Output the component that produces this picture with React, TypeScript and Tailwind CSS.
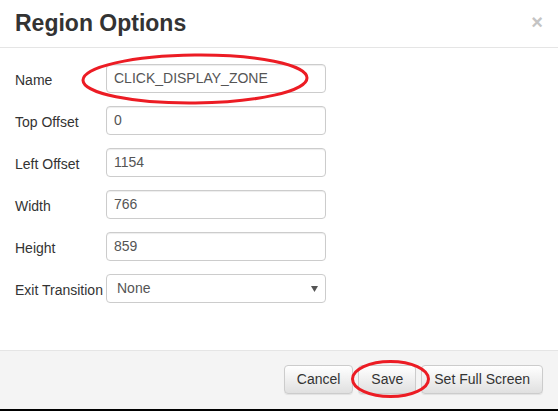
import React from 'react';

const fields: Array<{ label: string; value: string }> = [
  { label: 'Name', value: 'CLICK_DISPLAY_ZONE' },
  { label: 'Top Offset', value: '0' },
  { label: 'Left Offset', value: '1154' },
  { label: 'Width', value: '766' },
  { label: 'Height', value: '859' },
];

function Button({ children }: { children: React.ReactNode }) {
  return (
    <button className="h-[29px] px-[12px] rounded-[4px] border border-[#cccccc] bg-gradient-to-b from-white to-[#e0e0e0] text-[14px] text-[#333333] shadow-[inset_0_1px_0_rgba(255,255,255,0.15),0_1px_1px_rgba(0,0,0,0.075)]">
      {children}
    </button>
  );
}

export default function App() {
  return (
    <div className="relative w-[558px] h-[411px] bg-white flex flex-col font-['Liberation_Sans',Arial,sans-serif] text-[#333333] overflow-hidden">
      {/* Header */}
      <div className="h-[48px] px-[15px] flex items-center justify-between border-b border-[#e5e5e5] shrink-0">
        <h4 className="text-[23px] font-bold leading-none">Region Options</h4>
        <span className="text-[20px] font-bold leading-none text-[#c4c4c4] -mt-[4px]">×</span>
      </div>

      {/* Body */}
      <div className="flex-1 pt-[16px] px-[15px] flex flex-col gap-[13px]">
        {fields.map((f) => (
          <div key={f.label} className="flex items-center h-[29px]">
            <label className="w-[91px] text-[14px] pt-[4px]">{f.label}</label>
            <div className="w-[220px] h-[29px] border border-[#cccccc] rounded-[4px] px-[7px] flex items-center text-[14px] text-[#555555] shadow-[inset_0_1px_1px_rgba(0,0,0,0.075)]">
              {f.value}
            </div>
          </div>
        ))}
        <div className="flex items-center h-[29px]">
          <label className="w-[91px] text-[14px] pt-[4px] whitespace-nowrap">Exit Transition</label>
          <div className="w-[220px] h-[29px] border border-[#cccccc] rounded-[4px] pl-[10px] pr-[6px] flex items-center justify-between text-[14px] text-[#555555]">
            <span>None</span>
            <svg width="7" height="6" viewBox="0 0 7 6" className="mr-[1px]">
              <polygon points="0,0 7,0 3.5,6" fill="#555555" />
            </svg>
          </div>
        </div>
      </div>

      {/* Footer */}
      <div className="h-[59px] shrink-0 border-t border-[#e5e5e5] bg-[#f4f4f4] px-[15px] pt-[14px] flex justify-end gap-[5px]">
        <Button>Cancel</Button>
        <Button>Save</Button>
        <Button>Set Full Screen</Button>
      </div>
      <div className="h-[2px] bg-black shrink-0" />

      {/* Red annotation ellipses */}
      <svg className="absolute left-0 top-0 pointer-events-none" width="558" height="411">
        <ellipse cx="195" cy="79" rx="112" ry="24" fill="none" stroke="#ec1c24" strokeWidth="3" transform="rotate(-0.6 195 79)" />
        <ellipse cx="390.5" cy="379" rx="38" ry="17.5" fill="none" stroke="#ec1c24" strokeWidth="3" />
      </svg>
    </div>
  );
}
